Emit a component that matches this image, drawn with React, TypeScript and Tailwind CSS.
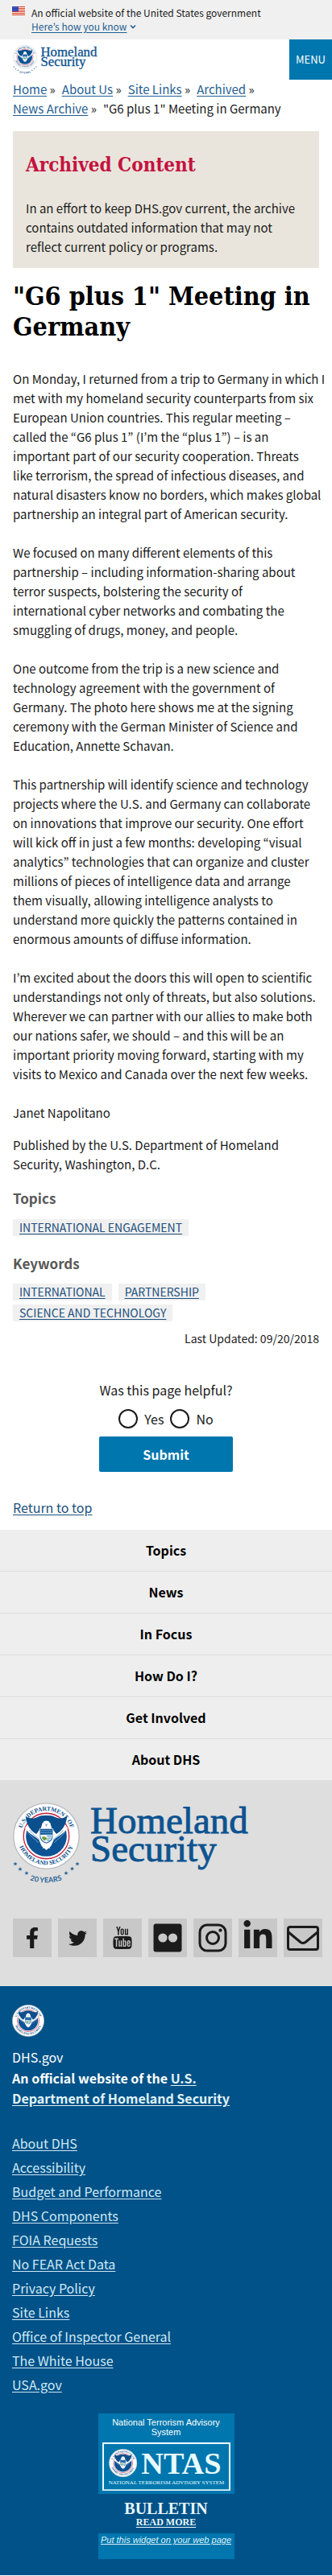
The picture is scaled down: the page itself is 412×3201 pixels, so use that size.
import type { ReactNode } from "react";
import { FaFacebookF, FaLinkedinIn, FaTwitter } from "react-icons/fa";
import { TfiYoutube } from "react-icons/tfi";

const paragraphs = [
  `On Monday, I returned from a trip to Germany in which I
met with my homeland security counterparts from six
European Union countries. This regular meeting –
called the “G6 plus 1” (I’m the “plus 1”) – is an
important part of our security cooperation. Threats
like terrorism, the spread of infectious diseases, and
natural disasters know no borders, which makes global
partnership an integral part of American security.`,
  `We focused on many different elements of this
partnership – including information-sharing about
terror suspects, bolstering the security of
international cyber networks and combating the
smuggling of drugs, money, and people.`,
  `One outcome from the trip is a new science and
technology agreement with the government of
Germany. The photo here shows me at the signing
ceremony with the German Minister of Science and
Education, Annette Schavan.`,
  `This partnership will identify science and technology
projects where the U.S. and Germany can collaborate
on innovations that improve our security. One effort
will kick off in just a few months: developing “visual
analytics” technologies that can organize and cluster
millions of pieces of intelligence data and arrange
them visually, allowing intelligence analysts to
understand more quickly the patterns contained in
enormous amounts of diffuse information.`,
  `I’m excited about the doors this will open to scientific
understandings not only of threats, but also solutions.
Wherever we can partner with our allies to make both
our nations safer, we should – and this will be an
important priority moving forward, starting with my
visits to Mexico and Canada over the next few weeks.`,
  "Janet Napolitano",
];
const crumbs = ["Home", "About Us", "Site Links", "Archived", "News Archive"];
const navItems = ["Topics", "News", "In Focus", "How Do I?", "Get Involved", "About DHS"];
const footerLinks = [
  "About DHS",
  "Accessibility",
  "Budget and Performance",
  "DHS Components",
  "FOIA Requests",
  "No FEAR Act Data",
  "Privacy Policy",
  "Site Links",
  "Office of Inspector General",
  "The White House",
  "USA.gov",
];

/* Seal artwork in a 100 x 100 box. */
function SealArt({ id }: { id: string }) {
  return (
    <g>
      <defs>
        <path id={`${id}-top`} d="M14.3 63 A38 38 0 1 1 85.7 63" />
        <path id={`${id}-bottom`} d="M6.8 50 A43.2 43.2 0 0 0 93.2 50" />
      </defs>
      <circle cx="50" cy="50" r="49" fill="#fff" stroke="#b9bcc0" strokeWidth="1.6" />
      <circle cx="50" cy="50" r="34" fill="none" stroke="#c41f3e" strokeWidth="1.6" />
      <circle cx="50" cy="50" r="30.5" fill="#0b5394" />
      <path d="M18 38 C25 48 33 50 39 56 L43 65 L50 71 L57 65 L61 56 C67 50 75 48 82 38 L76 30 H24 Z" fill="#fff" />
      <path d="M22 44 C28 52 33 54 38 60 M25 41 C31 50 36 51 40 56 M78 44 C72 52 67 54 62 60 M75 41 C69 50 64 51 60 56" stroke="#7ba3c6" strokeWidth="1.2" fill="none" />
      <path d="M19 20 C25 25 31 24 36 22 C42 18 58 18 64 22 C69 24 75 25 81 20 C80 33 74 42 65 47 L58 38 L56 31 C55 26 45 26 44 31 L42 38 L35 47 C26 42 20 33 19 20 Z" fill="#0b4f8c" />
      <path d="M45 30 C46 26 54 26 55 30 L54 34 L57 39 H43 L46 34 Z" fill="#fff" />
      <path d="M48 32 L52 32 L50 36 Z" fill="#8aa9c4" />
      <path d="M40 39 H60 V50 C60 56 55 60 50 62 C45 60 40 56 40 50 Z" fill="#0b5394" stroke="#fff" strokeWidth="0.8" />
      <path d="M41 42 H59 M41 45 H59" stroke="#7fb2dc" strokeWidth="1" />
      <path d="M41 48 H59 C59 55 55 58 50 60 C45 58 41 55 41 48 Z" fill="#eef5fa" />
      <path d="M43 53 C46 49 49 52 52 54 L47 57 Z" fill="#6f9a3c" />
      <path d="M51 50 H58 M52 53 H57 M51 56 H55" stroke="#3c86c0" strokeWidth="1.4" />
      <path d="M42 58 L47 64 L44 69 L50 66 L56 69 L53 64 L59 58 L50 61 Z" fill="#fff" />
      <g fill="#0b4f8c" fontFamily="Liberation Serif" fontWeight="700" fontSize="9">
        <text textAnchor="middle">
          <textPath href={`#${id}-top`} startOffset="50%">U.S. DEPARTMENT OF</textPath>
        </text>
        <text textAnchor="middle">
          <textPath href={`#${id}-bottom`} startOffset="50%">HOMELAND SECURITY</textPath>
        </text>
      </g>
    </g>
  );
}

function Seal({ id, className }: { id: string; className: string }) {
  return (
    <svg className={className} viewBox="0 0 100 100" role="img" aria-label="Department seal">
      <SealArt id={id} />
    </svg>
  );
}

const stars = [
  [3, 76],
  [9, 82.5],
  [17, 87.5],
  [66, 87.5],
  [73.5, 82],
  [80, 76],
];

function DhsLogo({ id, className }: { id: string; className: string }) {
  return (
    <svg className={`overflow-visible ${className}`} viewBox="0 0 304 98" role="img" aria-label="Homeland Security">
      <svg x="0" y="0" width="83" height="83" viewBox="0 0 100 100">
        <SealArt id={id} />
      </svg>
      {stars.map(([x, y]) => (
        <path
          key={x}
          transform={`translate(${x} ${y})`}
          d="M0 -2.6 L.8 -.8 L2.6 -.8 L1.2 .4 L1.7 2.3 L0 1.2 L-1.7 2.3 L-1.2 .4 L-2.6 -.8 L-.8 -.8 Z"
          fill="#2a6596"
        />
      ))}
      <defs>
        <path id={`${id}-years`} d="M-10 74 A64 64 0 0 0 92 74" />
      </defs>
      <text fill="#2a6596" fontFamily="Lato" fontWeight="700" fontSize="9" textAnchor="middle">
        <textPath href={`#${id}-years`} startOffset="50%">20 YEARS</textPath>
      </text>
      <g fill="#0d5390" stroke="#0d5390" strokeWidth="0.9" fontFamily="Liberation Serif" fontSize="47">
        <text x="96" y="38">Homeland</text>
        <text x="96" y="73">Security</text>
      </g>
    </svg>
  );
}

function Flag() {
  return (
    <svg className="mt-px h-[11px] w-4 shrink-0" viewBox="0 0 16 11" aria-hidden="true">
      <rect width="16" height="11" fill="#fff" />
      {[0, 2, 4, 6, 8, 10].map((y) => (
        <rect key={y} y={y} width="16" height="1.1" fill="#db3e1f" />
      ))}
      <rect width="8" height="6.2" fill="#1e33b1" />
      {[1.2, 3.1, 5].map((y) =>
        [1, 3, 5, 7].map((x) => <circle key={`${x}-${y}`} cx={x} cy={y} r="0.45" fill="#fff" />),
      )}
    </svg>
  );
}

function Tag({ children }: { children: ReactNode }) {
  return (
    <li className="bg-[#f0f0f0] px-2 text-sm leading-[21px]">
      <a href="#" className="text-[#1c4f7c] underline underline-offset-2">{children}</a>
    </li>
  );
}

function SocialTile({ label, children }: { label: string; children: ReactNode }) {
  return (
    <a href="#" aria-label={label} className="flex size-12 items-center justify-center bg-[#c8c8c8] text-[#1b1b1b]">
      {children}
    </a>
  );
}

export default function App() {
  return (
    <div className="bg-white text-[15px] leading-6 text-[#1b1b1b] font-['Noto_Sans_CJK_KR','Noto_Sans',sans-serif]">
      <section className="flex gap-2 bg-[#f0f0f0] px-[15px] pt-[7px] pb-2 text-xs leading-[17px]">
        <Flag />
        <div>
          <p>An official website of the United States government</p>
          <button type="button" className="flex items-center gap-1 text-[#1f5f93]">
            <span className="underline underline-offset-2">Here’s how you know</span>
            <svg className="h-2 w-2" viewBox="0 0 8 8" fill="none" stroke="currentColor" strokeWidth="1.6" aria-hidden="true">
              <path d="M1 2.5 L4 5.5 L7 2.5" />
            </svg>
          </button>
        </div>
      </section>

      <header className="flex items-start justify-between pl-4">
        <a href="#" className="mt-[7px]">
          <DhsLogo id="head" className="h-[35px] w-[109px]" />
        </a>
        <button type="button" className="h-[50px] w-[53px] bg-[#0076ae] text-[13px] text-white">MENU</button>
      </header>

      <main>
        <nav aria-label="Breadcrumb" className="px-4">
          <ol className="flex flex-wrap gap-x-2">
            {crumbs.map((c) => (
              <li key={c}>
                <a href="#" className="text-[#1f5f93] underline underline-offset-2">{c}</a> »
              </li>
            ))}
            <li>"G6 plus 1" Meeting in Germany</li>
          </ol>
        </nav>

        <section className="mx-4 mt-4 bg-[#e9e5dc] px-4 pt-6 pb-[14px]">
          <h2 className="text-2xl leading-9 font-bold text-[#c41240] font-['DejaVu_Serif_Condensed','DejaVu_Serif',serif]">
            Archived Content
          </h2>
          <p className="mt-6">
            In an effort to keep DHS.gov current, the archive contains outdated information that may not reflect current policy or programs.
          </p>
        </section>

        <h1 className="mt-4 pr-2 pl-4 text-[32px] leading-[38px] font-bold text-black font-['DejaVu_Serif_Condensed','DejaVu_Serif',serif]">
          "G6 plus 1" Meeting in Germany
        </h1>

        <article className="mt-[34px] flex flex-col gap-6 pr-2 pl-4 whitespace-pre-line">
          {paragraphs.map((p) => (
            <p key={p}>{p}</p>
          ))}
        </article>
        <p className="mt-4 px-4">Published by the U.S. Department of Homeland Security, Washington, D.C.</p>

        <section className="px-4">
          <h2 className="mt-[18px] text-[17px] font-bold text-[#585858]">Topics</h2>
          <ul className="mt-[14px] flex flex-wrap gap-x-2 gap-y-[5px]">
            <Tag>INTERNATIONAL ENGAGEMENT</Tag>
          </ul>
          <h2 className="mt-[22px] text-[17px] font-bold text-[#585858]">Keywords</h2>
          <ul className="mt-[13px] flex max-w-80 flex-wrap gap-x-2 gap-y-[5px]">
            <Tag>INTERNATIONAL</Tag>
            <Tag>PARTNERSHIP</Tag>
            <Tag>SCIENCE AND TECHNOLOGY</Tag>
          </ul>
          <p className="mt-[9px] text-right text-sm leading-6">Last Updated: 09/20/2018</p>
        </section>

        <form className="mt-10 flex flex-col items-center text-base leading-6" onSubmit={(e) => e.preventDefault()}>
          <fieldset>
            <legend className="mx-auto">Was this page helpful?</legend>
            <div className="mt-3 flex justify-center gap-2">
              {["Yes", "No"].map((v) => (
                <label key={v} className="flex items-center gap-2">
                  <input
                    type="radio"
                    name="helpful"
                    value={v}
                    className="size-6 appearance-none rounded-full border-2 border-[#1b1b1b] bg-white checked:bg-[#0076ae]"
                  />
                  {v}
                </label>
              ))}
            </div>
          </fieldset>
          <button type="submit" className="mt-[10px] h-11 w-[166px] rounded-xs bg-[#0076ae] font-bold text-white">
            Submit
          </button>
        </form>
        <p className="mt-8 px-4 text-base leading-6">
          <a href="#" className="text-[#1c4f7c] underline underline-offset-2">Return to top</a>
        </p>
      </main>

      <footer className="mt-4 text-base">
        <nav aria-label="Footer" className="bg-[#eeeeee]">
          <ul className="divide-y divide-[#dcdcdc]">
            {navItems.map((n) => (
              <li key={n}>
                <a href="#" className="block h-[51px] text-center leading-[51px] font-bold text-black">{n}</a>
              </li>
            ))}
          </ul>
        </nav>

        <section className="bg-[#dedede] pt-7 pr-3 pb-9 pl-4">
          <DhsLogo id="foot" className="h-[98px] w-[304px]" />
          <div className="mt-[46px] flex flex-wrap gap-2">
            <SocialTile label="Facebook">
              <FaFacebookF className="size-[26px]" />
            </SocialTile>
            <SocialTile label="Twitter">
              <FaTwitter className="size-[23px]" />
            </SocialTile>
            <SocialTile label="YouTube">
              <TfiYoutube className="size-7" />
            </SocialTile>
            <SocialTile label="Flickr">
              <svg className="size-9" viewBox="0 0 36 36" aria-hidden="true">
                <rect x="0.5" y="0.5" width="35" height="35" rx="3" fill="currentColor" />
                <circle cx="12" cy="18" r="5.6" fill="#c8c8c8" />
                <circle cx="24.5" cy="18" r="5.6" fill="#c8c8c8" />
              </svg>
            </SocialTile>
            <SocialTile label="Instagram">
              <svg className="size-9" viewBox="0 0 36 36" fill="none" stroke="currentColor" strokeWidth="3" aria-hidden="true">
                <rect x="2" y="2" width="32" height="32" rx="9" />
                <circle cx="18" cy="18" r="7.5" />
                <circle cx="27.5" cy="8.7" r="2.1" fill="currentColor" stroke="none" />
              </svg>
            </SocialTile>
            <SocialTile label="LinkedIn">
              <FaLinkedinIn className="mb-1 size-10" />
            </SocialTile>
            <SocialTile label="Email">
              <svg className="h-[31px] w-10" viewBox="0 0 40 31" fill="none" stroke="currentColor" strokeWidth="3" aria-hidden="true">
                <rect x="1.5" y="1.5" width="37" height="28" rx="2.5" />
                <path d="M2 8 L17 20.5 Q20 22.5 23 20.5 L38 8" />
              </svg>
            </SocialTile>
          </div>
        </section>

        <section className="bg-[#005288] px-[15px] pt-[23px] pb-5 text-white">
          <Seal id="foot-seal" className="size-10" />
          <p className="mt-[13px] leading-[25px]">DHS.gov</p>
          <p className="mt-px max-w-[290px] leading-[25px] font-bold">
            An official website of the <a href="#" className="text-[#e1f3f8] underline underline-offset-2">U.S. Department of Homeland Security</a>
          </p>
          <ul className="mt-7">
            {footerLinks.map((l) => (
              <li key={l} className="leading-[30px]">
                <a href="#" className="text-[#cfe8f5] underline underline-offset-2">{l}</a>
              </li>
            ))}
          </ul>

          <aside className="mx-auto mt-[21px] w-[169px] text-center font-['Liberation_Sans',sans-serif] text-[11px] leading-3">
            <div className="bg-[#0076ae] px-[5px] pt-[5px] pb-1">
              <p className="px-2">National Terrorism Advisory System</p>
              <svg className="mt-[7px] w-full" viewBox="0 0 158 60" role="img" aria-label="NTAS">
                <rect x="1" y="1" width="156" height="58" fill="none" stroke="#e8fbff" strokeWidth="2" />
                <svg x="8" y="8" width="35" height="35" viewBox="0 0 100 100">
                  <SealArt id="ntas-seal" />
                </svg>
                <g fill="#e8fbff" fontFamily="Liberation Serif">
                  <text x="48" y="39" fontSize="38" fontWeight="700">NTAS</text>
                  <text x="79" y="52" fontSize="7" textAnchor="middle">NATIONAL TERRORISM ADVISORY SYSTEM</text>
                </g>
              </svg>
            </div>
            <div className="pt-2 pb-[7px] font-bold text-[#e8f6fb] font-['Liberation_Serif',serif]">
              <p className="text-xl leading-5">BULLETIN</p>
              <a href="#" className="block text-xs leading-[14px] underline underline-offset-2">READ MORE</a>
            </div>
            <div className="bg-[#0076ae] pt-[2px] pb-[18px]">
              <a href="#" className="whitespace-nowrap text-[#dff3fa] italic underline">Put this widget on your web page</a>
            </div>
          </aside>
        </section>
      </footer>
    </div>
  );
}
